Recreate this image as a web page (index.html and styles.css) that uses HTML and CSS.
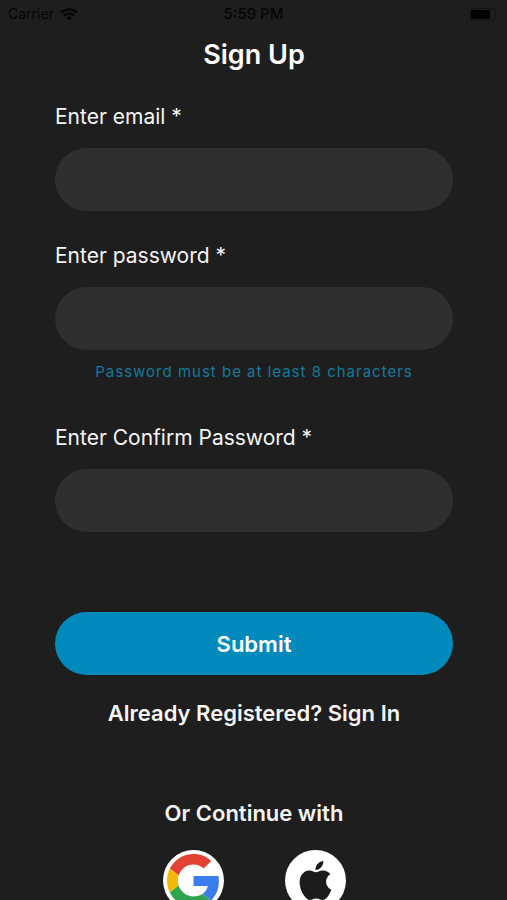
FILE: index.html
```html
<!DOCTYPE html>
<html lang="en">
<head>
<meta charset="utf-8">
<meta name="viewport" content="width=device-width, initial-scale=1">
<title>Sign Up</title>
<link rel="stylesheet" href="styles.css">
</head>
<body>
<div class="screen">
  <header class="status">
    <span class="carrier">Carrier
      <svg class="wifi" viewBox="0 0 18 13" aria-hidden="true">
        <path d="M1.2 4.6a11.2 11.2 0 0 1 15.6 0M4 7.6a7.2 7.2 0 0 1 10 0" fill="none" stroke="currentColor" stroke-width="2.2"/>
        <path d="M6.2 9.8a4 4 0 0 1 5.6 0L9 12.6z" fill="currentColor"/>
      </svg>
    </span>
    <span class="time">5:59 PM</span>
    <svg class="battery" viewBox="0 0 30 13" aria-hidden="true">
      <rect x=".5" y=".5" width="26" height="12" rx="3.5" fill="none" stroke="#151515"/>
      <rect x="2" y="2" width="19" height="9" rx="1.5" fill="#000"/>
      <path d="M28 4.5v4q1.500-.5 1.500-2t-1.500-2z" fill="#151515"/>
    </svg>
  </header>
  <main class="content">
    <h1 class="title">Sign Up</h1>
    <form class="form">
      <div class="field">
        <label for="email">Enter email *</label>
        <input id="email" type="email">
      </div>
      <div class="field">
        <label for="password">Enter password *</label>
        <input id="password" type="password" aria-describedby="hint">
        <p class="hint" id="hint">Password must be at least 8 characters</p>
      </div>
      <div class="field">
        <label for="confirm">Enter Confirm Password *</label>
        <input id="confirm" type="password">
      </div>
      <button class="submit" type="submit">Submit</button>
    </form>
    <a class="signin" href="#">Already Registered? Sign In</a>
    <h2 class="alternative">Or Continue with</h2>
    <div class="providers">
      <button class="provider" type="button" aria-label="Google">
        <svg class="google" viewBox="0 0 48 48" aria-hidden="true">
          <path fill="#e34133" d="M24 9.500c3.540 0 6.710 1.220 9.210 3.600l6.850-6.850C35.900 2.380 30.470 0 24 0 14.620 0 6.510 5.380 2.560 13.220l7.980 6.190C12.430 13.720 17.740 9.500 24 9.500z"/>
          <path fill="#3b7ded" d="M46.980 24.550c0-1.570-.15-3.090-.38-4.550H24v9.020h12.940c-.58 2.960-2.260 5.480-4.780 7.180l7.730 6c4.510-4.180 7.090-10.360 7.090-17.650z"/>
          <path fill="#f2b90b" d="M10.530 28.590c-.48-1.450-.76-2.990-.76-4.590s.27-3.140.76-4.590l-7.980-6.190C.92 16.460 0 20.120 0 24s.92 7.540 2.560 10.780l7.970-6.190z"/>
          <path fill="#2ea44d" d="M24 48c6.480 0 11.930-2.130 15.890-5.810l-7.730-6c-2.150 1.450-4.920 2.300-8.160 2.300-6.260 0-11.570-4.220-13.470-9.910l-7.980 6.190C6.510 42.620 14.620 48 24 48z"/>
        </svg>
      </button>
      <button class="provider" type="button" aria-label="Apple">
        <svg class="apple" viewBox="0 0 24 24" aria-hidden="true">
          <path fill="#1c1c1c" d="M12.152 6.896c-.948 0-2.415-1.078-3.960-1.040-2.040.027-3.910 1.183-4.961 3.014-2.117 3.675-.546 9.103 1.519 12.090 1.013 1.454 2.208 3.090 3.792 3.039 1.520-.065 2.090-.987 3.935-.987 1.831 0 2.350.987 3.960.948 1.637-.026 2.676-1.480 3.676-2.948 1.156-1.688 1.636-3.325 1.662-3.415-.039-.013-3.182-1.221-3.220-4.857-.026-3.040 2.480-4.494 2.597-4.559-1.429-2.090-3.623-2.324-4.390-2.376-2-.156-3.675 1.090-4.610 1.090zM15.530 3.830c.843-1.012 1.400-2.427 1.245-3.830-1.207.052-2.662.805-3.532 1.818-.780.896-1.454 2.338-1.273 3.714 1.338.104 2.715-.688 3.559-1.701"/>
        </svg>
      </button>
    </div>
  </main>
</div>
</body>
</html>
```
FILE: styles.css
```css
* {
  box-sizing: border-box;
}

body {
  margin: 0;
  background: #1e1e1e;
  color: #f5f5f5;
  font-family: Inter, "Liberation Sans", sans-serif;
  font-size: 21px;
  line-height: 28px;
}

.screen {
  height: 100vh;
  overflow: hidden;
}

.status {
  display: grid;
  grid-template-columns: 1fr auto 1fr;
  align-items: center;
  height: 28px;
  padding: 0 8px;
  color: #050505;
  font-size: 14px;
}

.carrier {
  display: flex;
  align-items: center;
  gap: 6px;
}

.wifi {
  width: 18px;
  height: 13px;
}

.time {
  font-size: 15px;
  font-weight: 500;
}

.battery {
  justify-self: end;
  width: 30px;
  height: 13px;
}

.content {
  display: flex;
  flex-direction: column;
  align-items: center;
  padding: 9px 54px 0 55px;
}

.title {
  margin: 0 0 30px;
  font-size: 27px;
  line-height: 36px;
  font-weight: 600;
  color: #fff;
}

.form {
  display: flex;
  flex-direction: column;
  gap: 31px;
  width: 100%;
}

.field {
  display: flex;
  flex-direction: column;
}

.field label {
  margin-bottom: 17px;
}

.field input {
  width: 100%;
  height: 63px;
  padding: 0 28px;
  border: 0;
  border-radius: 32px;
  background: #2f2f2f;
  color: inherit;
  font: inherit;
}

.hint {
  margin: 12px 0 11px;
  color: #137a9f;
  font-size: 15px;
  line-height: 20px;
  letter-spacing: 1px;
  text-align: center;
}

.submit {
  height: 63px;
  margin-top: 49px;
  border: 0;
  border-radius: 32px;
  background: #028abd;
  color: #fff;
  font: inherit;
  font-size: 22px;
  font-weight: 600;
}

.signin {
  margin-top: 24px;
  color: inherit;
  font-size: 22px;
  font-weight: 600;
  text-decoration: none;
}

.alternative {
  margin: 72px 0 23px;
  font-size: 22px;
  font-weight: 600;
}

.providers {
  display: flex;
  gap: 61px;
}

.provider {
  display: grid;
  place-items: center;
  width: 61px;
  height: 61px;
  padding: 0;
  border: 0;
  border-radius: 50%;
  background: #fff;
}

.google {
  width: 53px;
  height: 53px;
}

.apple {
  width: 39px;
  height: 39px;
}
```
